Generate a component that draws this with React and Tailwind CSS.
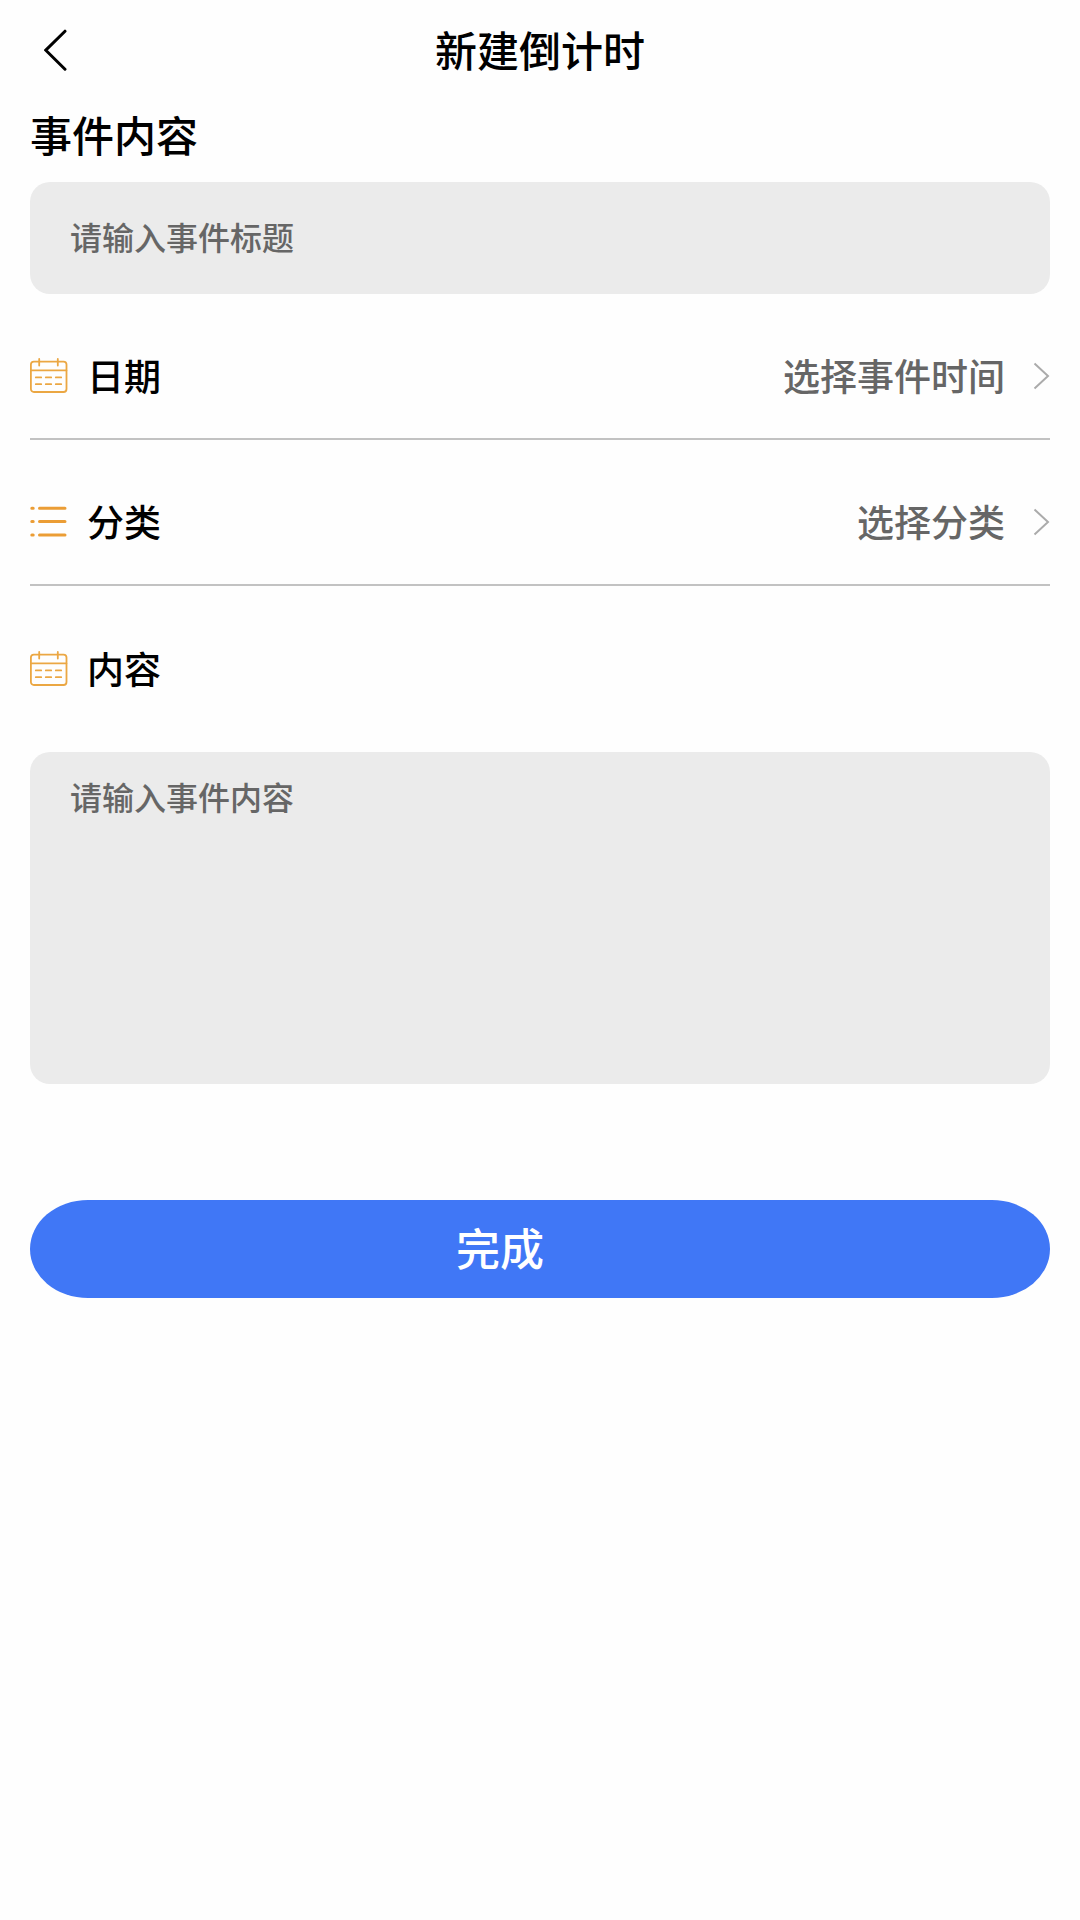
import { useState } from "react";

function CalendarIcon() {
  return (
    <svg
      className="w-[38px] h-9 shrink-0"
      aria-hidden="true"
      viewBox="0 0 38 36"
      fill="none"
      stroke="#eba743"
      strokeWidth="1.8"
      strokeLinecap="round"
    >
      <rect x="0.9" y="3.6" width="35.6" height="30.4" rx="3" />
      <path d="M1 12.4h35.4M9.2 1v6.6M27.8 1v6.6" />
      <path d="M5.8 19.4h5.4M15.8 19.4h5.4M25.8 19.4h5.4M5.8 26.2h5.4M15.8 26.2h5.4M25.8 26.2h5.4" />
    </svg>
  );
}

function ListIcon() {
  return (
    <svg
      className="w-[38px] h-9 shrink-0"
      aria-hidden="true"
      viewBox="0 0 38 36"
      fill="none"
      stroke="#eb9d35"
      strokeWidth="3"
      strokeLinecap="round"
    >
      <path d="M9.5 4.3h25.5M9.5 17.6h25.5M9.5 30.9h25.5" />
      <path d="M1.8 4.3h1.4M1.8 17.6h1.4M1.8 30.9h1.4" />
    </svg>
  );
}

function ChevronRight() {
  return (
    <svg
      className="w-[17px] h-7 shrink-0"
      aria-hidden="true"
      viewBox="0 0 17 28"
      fill="none"
      stroke="#ababab"
      strokeWidth="2"
    >
      <path d="M1.5 1.5l13.5 12.5l-13.5 12.5" />
    </svg>
  );
}

function PickerRow({ id, icon, label, value }) {
  return (
    <div className="flex items-center justify-between mt-5 h-[126px] border-b-2 border-[#c2c2c2]">
      <div className="flex items-center gap-[19px]">
        {icon}
        <label htmlFor={id} className="text-[37px] font-medium text-black">
          {label}
        </label>
      </div>
      <button
        id={id}
        type="button"
        className="flex items-center gap-7 text-[37px] font-medium text-[#666666] cursor-pointer"
      >
        {value}
        <ChevronRight />
      </button>
    </div>
  );
}

export default function App() {
  const [title, setTitle] = useState("");
  const [content, setContent] = useState("");

  return (
    <div className="min-h-screen bg-[#fefefe] font-['Noto_Sans_CJK_SC',sans-serif]">
      <header className="grid grid-cols-[80px_1fr_80px] items-center h-[100px]">
        <button
          type="button"
          aria-label="返回"
          className="flex items-center justify-end pr-3 h-full cursor-pointer"
        >
          <svg
            className="w-6 h-11"
            aria-hidden="true"
            viewBox="0 0 24 44"
            fill="none"
            stroke="#000"
            strokeWidth="3"
            strokeLinecap="round"
          >
            <path d="M21 3.2L1.8 22.2L21 41.2" />
          </svg>
        </button>
        <h1 className="pb-0.5 text-center text-[42px] leading-[60px] font-medium text-black">
          新建倒计时
        </h1>
      </header>

      <form className="px-[30px]" onSubmit={(e) => e.preventDefault()}>
        <label
          htmlFor="title"
          className="block text-[42px] leading-[68px] font-medium text-black"
        >
          事件内容
        </label>
        <input
          id="title"
          type="text"
          value={title}
          onChange={(e) => setTitle(e.target.value)}
          placeholder="请输入事件标题"
          className="block w-full h-28 mt-[14px] px-10 pb-1 rounded-[20px] bg-[#ebebeb] text-[32px] font-medium text-black placeholder:text-[#666666] outline-none"
        />

        <PickerRow id="date" icon={<CalendarIcon />} label="日期" value="选择事件时间" />
        <PickerRow id="category" icon={<ListIcon />} label="分类" value="选择分类" />

        <div className="flex items-center gap-[19px] mt-5 h-[126px]">
          <CalendarIcon />
          <label htmlFor="content" className="text-[37px] font-medium text-black">
            内容
          </label>
        </div>
        <textarea
          id="content"
          value={content}
          onChange={(e) => setContent(e.target.value)}
          placeholder="请输入事件内容"
          className="block w-full h-[332px] mt-5 px-10 py-5 rounded-[20px] bg-[#ebebeb] text-[32px] leading-[48px] font-medium text-black placeholder:text-[#666666] outline-none resize-none"
        />

        <button
          type="submit"
          className="block w-full h-[98px] mt-[116px] pr-20 pb-1 rounded-[58px/49px] bg-[#4077f6] text-[44px] font-medium text-white cursor-pointer"
        >
          完成
        </button>
      </form>
    </div>
  );
}
